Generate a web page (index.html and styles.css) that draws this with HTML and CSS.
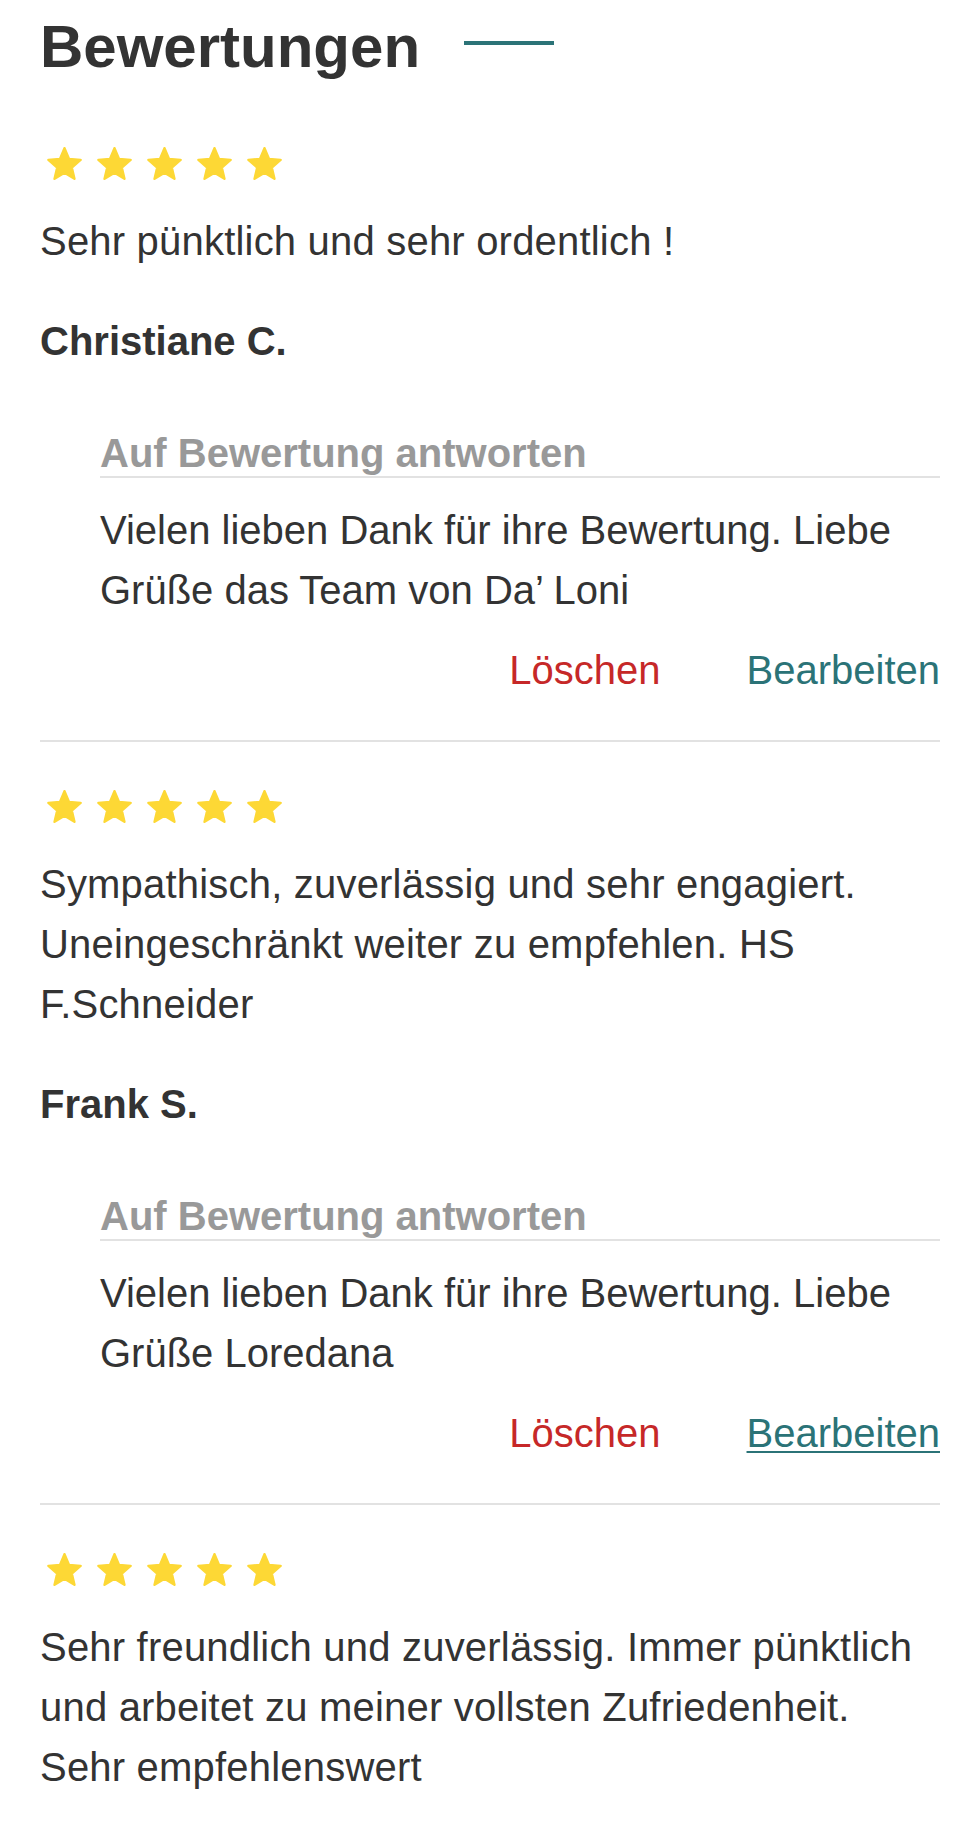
FILE: index.html
```html
<!DOCTYPE html>
<html lang="de">
<head>
  <meta charset="UTF-8" />
  <meta name="viewport" content="width=device-width, initial-scale=1.0"/>
  <title>Bewertungen</title>
  <link rel="stylesheet" href="styles.css">
</head>
<body>

  <!-- star icon, reused below -->
  <svg class="sprite" xmlns="http://www.w3.org/2000/svg">
    <symbol id="star" viewBox="1.25 1.25 21.5 20.5">
      <path d="M12 17.27L18.18 21l-1.64-7.03L22 9.24l-7.19-.61L12 2 9.19 8.63 2 9.24l5.46 4.73L5.82 21z"/>
    </symbol>
  </svg>

  <main class="page">
    <h1 class="section-title">Bewertungen</h1>

    <div class="review">
      <div class="stars">
        <svg class="star"><use href="#star"/></svg>
        <svg class="star"><use href="#star"/></svg>
        <svg class="star"><use href="#star"/></svg>
        <svg class="star"><use href="#star"/></svg>
        <svg class="star"><use href="#star"/></svg>
      </div>
      <p class="review-text">Sehr pünktlich und sehr ordentlich !</p>
      <p class="review-author">Christiane C.</p>

      <div class="reply">
        <h2 class="reply-title">Auf Bewertung antworten</h2>
        <p class="reply-text">Vielen lieben Dank für ihre Bewertung. Liebe Grüße das Team von Da’ Loni</p>
        <div class="reply-actions">
          <a href="#" class="action-delete">Löschen</a>
          <a href="#" class="action-edit">Bearbeiten</a>
        </div>
      </div>
    </div>

    <div class="review">
      <div class="stars">
        <svg class="star"><use href="#star"/></svg>
        <svg class="star"><use href="#star"/></svg>
        <svg class="star"><use href="#star"/></svg>
        <svg class="star"><use href="#star"/></svg>
        <svg class="star"><use href="#star"/></svg>
      </div>
      <p class="review-text">Sympathisch, zuverlässig und sehr engagiert. Uneingeschränkt weiter zu empfehlen. HS F.Schneider</p>
      <p class="review-author">Frank S.</p>

      <div class="reply">
        <h2 class="reply-title">Auf Bewertung antworten</h2>
        <p class="reply-text">Vielen lieben Dank für ihre Bewertung. Liebe Grüße Loredana</p>
        <div class="reply-actions">
          <a href="#" class="action-delete">Löschen</a>
          <a href="#" class="action-edit is-focused">Bearbeiten</a>
        </div>
      </div>
    </div>

    <div class="review">
      <div class="stars">
        <svg class="star"><use href="#star"/></svg>
        <svg class="star"><use href="#star"/></svg>
        <svg class="star"><use href="#star"/></svg>
        <svg class="star"><use href="#star"/></svg>
        <svg class="star"><use href="#star"/></svg>
      </div>
      <p class="review-text">Sehr freundlich und zuverlässig. Immer pünktlich und arbeitet zu meiner vollsten Zufriedenheit. Sehr empfehlenswert</p>
    </div>
  </main>

</body>
</html>
```

FILE: styles.css
```css
body {
  margin: 0;
  font-family: 'Liberation Sans', Arial, Helvetica, sans-serif;
  background-color: #ffffff;
  color: #333;
}

.sprite {
  display: none;
}

.page {
  padding: 12px 40px 40px;
}

.section-title {
  display: flex;
  align-items: center;
  margin: 0 0 17px;
  font-size: 60px;
  line-height: 70px;
  font-weight: bold;
  color: #333;
}

.section-title::after {
  content: "";
  width: 90px;
  height: 4px;
  margin: 0 0 8px 44px;
  background-color: #2b7377;
}

.review {
  padding: 48px 0 40px;
  border-bottom: 2px solid #e2e2e2;
}

.review:last-child {
  border-bottom: none;
}

.stars {
  display: flex;
  gap: 15px;
  padding-left: 7px;
  margin-bottom: 31px;
}

.star {
  width: 35px;
  height: 33px;
  fill: #fdd835;
  stroke: #fdd835;
  stroke-width: 1.5;
  stroke-linejoin: round;
}

.review-text,
.review-author,
.reply-text {
  margin: 0;
  font-size: 40px;
  line-height: 60px;
}

.review-text {
  max-width: 878px;
  margin-bottom: 40px;
  letter-spacing: 0.2px;
}

.review-author {
  font-weight: bold;
}

.reply {
  margin: 60px 0 0 60px;
}

.reply-title {
  margin: 0;
  font-size: 40px;
  line-height: 45px;
  font-weight: bold;
  color: #999;
  border-bottom: 2px solid #e2e2e2;
}

.reply-text {
  margin-top: 22px;
}

.reply-actions {
  display: flex;
  justify-content: flex-end;
  gap: 86px;
  margin-top: 20px;
  font-size: 40px;
  line-height: 60px;
}

.reply-actions a {
  text-decoration: none;
}

.action-delete {
  color: #c62828;
}

.action-edit {
  color: #2b7377;
}

.action-edit.is-focused {
  text-decoration: underline;
  text-decoration-thickness: 2px;
  text-underline-offset: 4px;
}
```
